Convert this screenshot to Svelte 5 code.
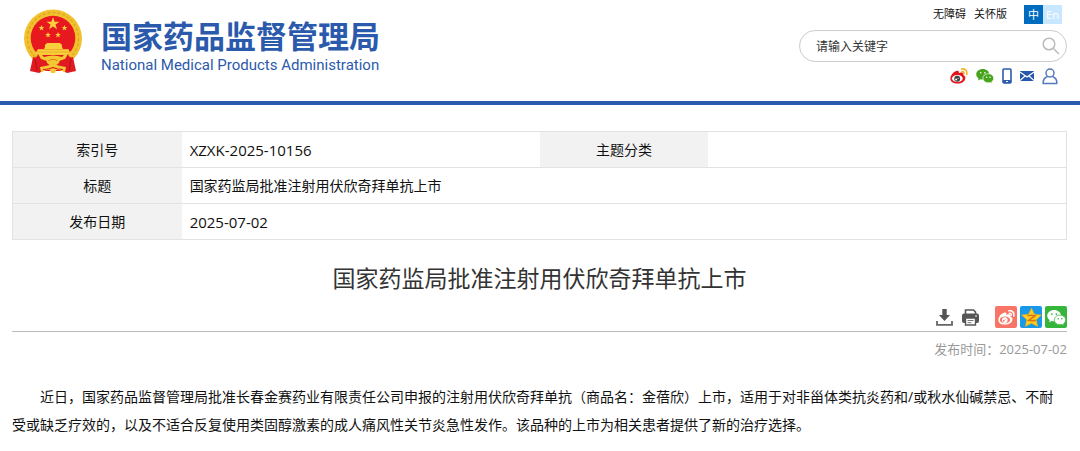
<script>
  const title = '国家药监局批准注射用伏欣奇拜单抗上市';
  const date = '2025-07-02';
  let keyword = $state('');
</script>

{#snippet weibo(body, eye, pupil, wave)}
  <path d="M.5 15C.5 10 7 4 10.500 5c2 .6 1.300 3 1.300 3s5-1.800 6 .3c.6 1.300-.3 2.500-.3 2.500 2.200.8 3 2.200 3 3.700 0 4-4.600 7.500-10.500 7.500S.5 19.500.5 15z" fill={body} />
  <ellipse cx="9.800" cy="15.400" rx="7.200" ry="4.700" fill={eye} />
  <circle cx="9.600" cy="15.600" r="4" fill={pupil} />
  <circle cx="8.200" cy="16.600" r="1.300" fill={eye} />
  <circle cx="10.900" cy="14.900" r=".7" fill={eye} />
  <path d="M15.500 2.600c4.500-1 7.800 2.400 6.800 7.200M16 6.200c1.800-.4 3 .9 2.600 2.700" fill="none" stroke={wave} stroke-width="2.200" stroke-linecap="round" />
{/snippet}

{#snippet wechat(ink, eye)}
  <path d="M9 2.500C4.100 2.500.3 5.700.3 9.700c0 2.200 1.200 4.200 3.100 5.500L2.700 18l3.200-1.700c1 .3 2 .5 3.100.5 4.900 0 8.700-3.100 8.700-7.100S13.900 2.500 9 2.500z" fill={ink} />
  <circle cx="6.200" cy="7.600" r="1.100" fill={eye} />
  <circle cx="11.800" cy="7.600" r="1.100" fill={eye} />
  <path d="M16.400 8.900c-4.100 0-7.200 2.700-7.200 6.100s3.100 6.100 7.200 6.100c.9 0 1.700-.1 2.500-.4l2.600 1.400-.7-2.300c1.700-1.100 2.800-2.900 2.800-4.800 0-3.400-3.100-6.100-7.200-6.100z" fill={ink} stroke={eye} stroke-width=".9" />
  <circle cx="14.200" cy="13.500" r="1" fill={eye} />
  <circle cx="18.700" cy="13.500" r="1" fill={eye} />
{/snippet}

<header>
  <a class="brand" href="#home" aria-label="国家药品监督管理局">
    <svg class="emblem" viewBox="0 0 60 66" aria-hidden="true">
      <ellipse cx="30" cy="29.500" rx="29" ry="29" fill="#f2c12e" />
      <ellipse cx="30" cy="29.500" rx="25.500" ry="26" fill="none" stroke="#dfa323" stroke-width="1.200" stroke-dasharray="3 2" />
      <circle cx="30" cy="29" r="22.300" fill="#e8181f" />
      <g fill="#f8cf3c">
        <path d="m30 8 1.600 4.700h4.900l-4 2.900 1.500 4.700-4-2.900-4 2.900 1.500-4.700-4-2.900h4.900z" />
        <path d="m18.500 16 .8 2h2.100l-1.700 1.300.6 2.100-1.800-1.200-1.800 1.200.6-2.100-1.700-1.300h2.100z" />
        <path d="m41.500 16 .8 2h2.100l-1.700 1.300.6 2.100-1.800-1.200-1.800 1.200.6-2.100-1.700-1.300h2.100z" />
        <path d="m25 23 .8 2h2.100l-1.700 1.300.6 2.100-1.800-1.200-1.800 1.200.6-2.100-1.700-1.300h2.100z" />
        <path d="m35 23 .8 2h2.100l-1.700 1.300.6 2.100-1.800-1.200-1.800 1.200.6-2.100-1.700-1.300h2.100z" />
        <path d="M22 38v-2l2-2h13l2 2v2l1 2h5l3 5H12l3-5h6z" />
      </g>
      <path d="M15 40.500h31M13 43h35" stroke="#e8a325" stroke-width=".8" />
      <path d="M10 48c3 1 4 0 5-3h30c1 3 2 4 5 3l3 14-9 2-4-2H20l-4 2-9-2z" fill="#e01a20" />
      <path d="M15 45h30l-3 5q-12 5-24 0z" fill="#f5c932" />
      <path d="M19 46h22l-2 2q-9-3-18 0z" fill="#e01a20" />
      <ellipse cx="30" cy="52" rx="6.500" ry="4.500" fill="#f5c932" />
      <path d="M25.500 52q4.500-3.500 9 0" fill="none" stroke="#dc7c1f" />
      <path d="M17 58q7-1 13-3 6 2 13 3l-1 5-6-2h-3l-1 3h-4l-1-3h-3l-6 2z" fill="#f5c932" />
      <path d="M20 60.500q6 0 10-2 4 2 10 2" fill="none" stroke="#e01a20" stroke-width="1.200" />
      <path d="m12 50 2 12M48 50l-2 12" stroke="#b9131a" stroke-width="1.200" />
    </svg>
    <span class="names">
      <strong>国家药品监督管理局</strong>
      <span lang="en">National Medical Products Administration</span>
    </span>
  </a>

  <div class="tools">
    <nav class="quick">
      <a href="#accessible">无障碍</a>
      <a href="#care">关怀版</a>
      <span class="langs"><button class="on">中</button><button>En</button></span>
    </nav>
    <form class="search" onsubmit={(e) => e.preventDefault()}>
      <input type="text" aria-label="请输入关键字" placeholder="请输入关键字" bind:value={keyword} />
      <button aria-label="搜索">
        <svg width="18" height="18" viewBox="0 0 18 18"><circle cx="7" cy="7" r="5.800" /><path d="m11.500 11.500 5.500 5.500" /></svg>
      </button>
    </form>
    <nav class="social">
      <a href="#weibo" aria-label="微博"><svg width="18" height="18" viewBox="0 0 24 24">{@render weibo('#e3151b', '#fff', '#444', '#f3b32b')}</svg></a>
      <a href="#wechat" aria-label="微信"><svg width="18" height="18" viewBox="0 0 24 24">{@render wechat('#46a51c', '#fff')}</svg></a>
      <a href="#mobile" aria-label="移动版"><svg width="10" height="16" viewBox="0 0 10 16"><rect x="1" y="1" width="8" height="14" rx="1" fill="#fff" stroke="#2d5cad" stroke-width="1.600" /><path d="M1 12h8v3H1z" fill="#2d5cad" /><path d="M4 13.500h2" stroke="#fff" /></svg></a>
      <a href="#mail" aria-label="邮箱"><svg width="14" height="10" viewBox="0 0 14 10"><rect width="14" height="10" fill="#2657ad" /><path d="m0 1 7 5 7-5M0 9.500l5-4.500M14 9.500 9 5" fill="none" stroke="#fff" stroke-width="1.100" /></svg></a>
      <a href="#user" aria-label="用户"><svg width="16" height="17" viewBox="0 0 16 17"><circle cx="8" cy="5" r="4" fill="none" stroke="#5379bd" stroke-width="1.500" /><path d="M5.500 8.500C2.500 9.500 1 12 1.200 15.500h13.600C15 12 13.500 9.500 10.500 8.500" fill="none" stroke="#5379bd" stroke-width="1.500" /></svg></a>
    </nav>
  </div>
</header>

<main>
  <table>
    <tbody>
      <tr><th scope="row">索引号</th><td class="num">XZXK-2025-10156</td><th scope="row">主题分类</th><td></td></tr>
      <tr><th scope="row">标题</th><td colspan="3">{title}</td></tr>
      <tr><th scope="row">发布日期</th><td class="num" colspan="3">{date}</td></tr>
    </tbody>
  </table>

  <h1>{title}</h1>

  <div class="actions">
    <button aria-label="下载"><svg width="17" height="17" viewBox="0 0 17 17"><path d="M6.300 0h4.400v6H14l-5.500 6L3 6h3.300z" fill="#555" /><path d="M1 12v3.800h15V12" fill="none" stroke="#666" stroke-width="1.800" /></svg></button>
    <button class="print" aria-label="打印"><svg width="17" height="17" viewBox="0 0 17 17"><path d="M3.500 5V1h8l2 2v2" fill="#fff" stroke="#555" stroke-width="1.600" /><rect y="4.500" width="17" height="9.500" rx="2" fill="#555" /><path d="M13 7h2" stroke="#fff" /><path d="M3.500 9h10v7h-10z" fill="#fff" stroke="#555" stroke-width="1.400" /><path d="M5.500 11.500h6M5.500 13.700h4" stroke="#777" /></svg></button>
    <a class="share red" href="#share-weibo" aria-label="分享到微博"><svg width="17" height="17" viewBox="0 0 24 24">{@render weibo('#fff', '#f77466', '#fff', '#fff')}</svg></a>
    <a class="share blue" href="#share-qzone" aria-label="分享到QQ空间"><svg width="21" height="21" viewBox="0 0 24 24"><path d="m12 1 3.400 7.200 8 .9-5.900 5.400 1.600 7.900L12 18.500l-7.100 3.900 1.600-7.900L.6 9.100l8-.9z" fill="#ffce20" stroke="#e9a21c" stroke-width=".6" /><path d="M7.500 10c3-.8 5.500-.8 8.500 0l-7 5.300c3 .7 5.500.6 8-.1" fill="none" stroke="#d97812" stroke-width="1.900" /></svg></a>
    <a class="share green" href="#share-wechat" aria-label="分享到微信"><svg width="19" height="19" viewBox="0 0 24 24">{@render wechat('#fff', '#35b53b')}</svg></a>
  </div>

  <p class="published">发布时间：<time>{date}</time></p>

  <article>
    <p>近日，国家药品监督管理局批准长春金赛药业有限责任公司申报的注射用伏欣奇拜单抗（商品名：金蓓欣）上市，适用于对非甾体类抗炎药和/或秋水仙碱禁忌、不耐受或缺乏疗效的，以及不适合反复使用类固醇激素的成人痛风性关节炎急性发作。该品种的上市为相关患者提供了新的治疗选择。</p>
  </article>
</main>

<style>
  :global(body) {
    margin: 0;
    background: #fff;
    color: #111;
    font: 14px/20px "Open Sans", "Noto Sans CJK SC", sans-serif;
  }
  a { color: inherit; text-decoration: none; }
  button { padding: 0; border: 0; background: none; font: inherit; cursor: pointer; }
  svg { display: block; }

  header {
    display: flex;
    justify-content: space-between;
    box-sizing: border-box;
    min-height: 105px;
    padding: 4px 13px 0 23px;
    border-bottom: 4px solid #2b5aac;
  }
  .brand { display: flex; align-items: flex-start; gap: 18px; padding-top: 5px; color: #2b5aac; }
  .emblem { width: 60px; height: 66px; }
  .names { display: flex; flex-direction: column; padding-top: 6px; white-space: nowrap; }
  .names strong { font: 700 31px/40px "Noto Sans CJK SC", sans-serif; }
  .names span { font: 15px/20px Roboto, sans-serif; }

  .tools { width: 268px; }
  .quick {
    display: flex;
    justify-content: flex-end;
    align-items: center;
    gap: 8px;
    padding-right: 5px;
    font-size: 11px;
  }
  .langs { display: flex; margin-left: 9px; }
  .langs button { width: 19px; height: 19px; background: #c9e8ff; color: #fff; line-height: 19px; }
  .langs .on { background: #006cbf; }
  .search {
    display: flex;
    align-items: center;
    box-sizing: border-box;
    height: 32px;
    margin-top: 6px;
    padding: 0 6px 0 16px;
    border: 1px solid #ccc;
    border-radius: 16px;
  }
  .search input { flex: 1; min-width: 0; padding: 0; border: 0; outline: 0; background: none; font: 12px/20px "Noto Sans CJK SC", sans-serif; }
  .search input::placeholder { color: #333; opacity: 1; }
  .search svg { fill: none; stroke: #bbb; stroke-width: 1.5; }
  .social { display: flex; justify-content: flex-end; align-items: center; gap: 8px; margin-top: 5px; padding-right: 9px; }

  main { padding: 26px 13px 16px 12px; }
  table { width: 100%; table-layout: fixed; border-collapse: collapse; border: 1px solid #e2e2e2; }
  tr { border-bottom: 1px solid #e2e2e2; }
  th, td { height: 35px; padding: 0; line-height: 20px; font-weight: 400; }
  th { width: 16%; background: #f2f2f2; }
  td { padding-left: 8px; }
  .num { font-size: 15px; }

  h1 { margin: 21px 0 0; color: #333; font-size: 23px; line-height: 34px; font-weight: 400; text-align: center; }
  .actions {
    display: flex;
    justify-content: flex-end;
    align-items: center;
    gap: 3px;
    margin-top: 11px;
    padding-bottom: 3px;
    border-bottom: 1px solid #bbb;
  }
  .print { margin: 0 13px 0 6px; }
  .share { display: grid; place-items: center; width: 22px; height: 22px; border-radius: 2px; }
  .red { background: #f77466; }
  .blue { background: #1898e8; }
  .green { background: #35b53b; }
  .published { margin: 7px 0 0; color: #999; font-size: 13px; text-align: right; }
  article { margin-top: 24px; padding-right: 8px; }
  article p { margin: 0; line-height: 28px; text-indent: 2em; }
</style>
